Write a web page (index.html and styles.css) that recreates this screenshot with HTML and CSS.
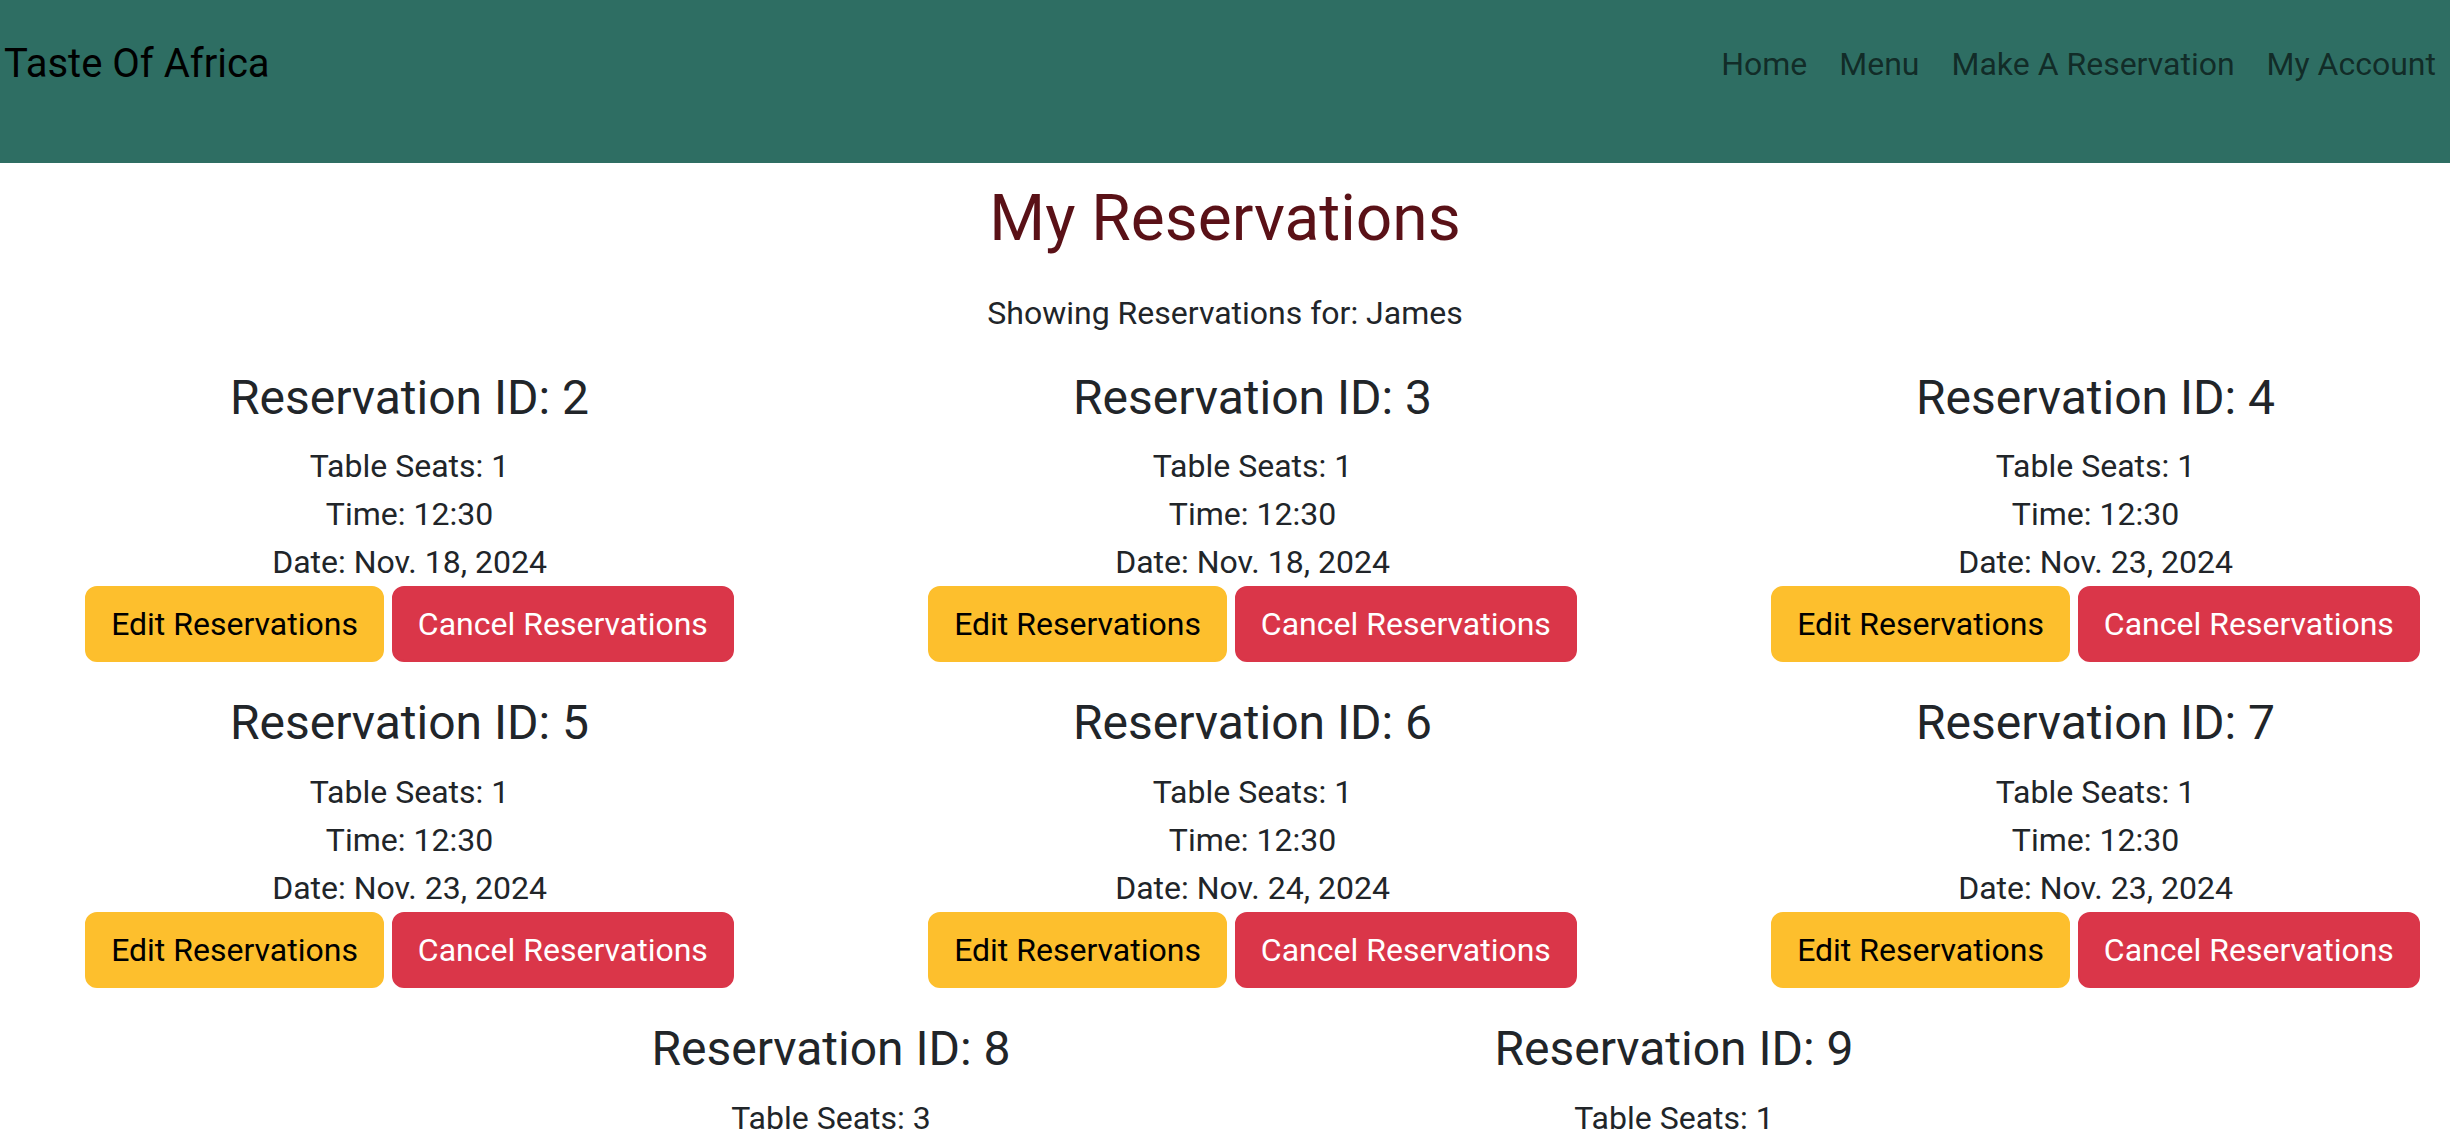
FILE: index.html
```html
<!DOCTYPE html>
<html lang="en">
<head>
<meta charset="utf-8">
<title>My Reservations - Taste Of Africa</title>
<link rel="stylesheet" href="styles.css">
</head>
<body>
<header class="navbar">
  <a class="brand" href="#">Taste Of Africa</a>
  <ul class="nav">
    <li><a class="nav-link" href="#">Home</a></li>
    <li><a class="nav-link" href="#">Menu</a></li>
    <li><a class="nav-link" href="#">Make A Reservation</a></li>
    <li><a class="nav-link" href="#">My Account</a></li>
  </ul>
</header>
<main class="page">
  <h2 class="page-title">My Reservations</h2>
  <p class="owner">Showing Reservations for: James</p>
  <div class="res-grid">
    <div class="res">
      <h4 class="res-title">Reservation ID: 2</h4>
      <p class="res-line">Table Seats: 1</p>
      <p class="res-line">Time: 12:30</p>
      <p class="res-line">Date: Nov. 18, 2024</p>
      <div class="actions"><a class="btn btn-edit" href="#">Edit Reservations</a> <a class="btn btn-cancel" href="#">Cancel Reservations</a></div>
    </div>
    <div class="res">
      <h4 class="res-title">Reservation ID: 3</h4>
      <p class="res-line">Table Seats: 1</p>
      <p class="res-line">Time: 12:30</p>
      <p class="res-line">Date: Nov. 18, 2024</p>
      <div class="actions"><a class="btn btn-edit" href="#">Edit Reservations</a> <a class="btn btn-cancel" href="#">Cancel Reservations</a></div>
    </div>
    <div class="res">
      <h4 class="res-title">Reservation ID: 4</h4>
      <p class="res-line">Table Seats: 1</p>
      <p class="res-line">Time: 12:30</p>
      <p class="res-line">Date: Nov. 23, 2024</p>
      <div class="actions"><a class="btn btn-edit" href="#">Edit Reservations</a> <a class="btn btn-cancel" href="#">Cancel Reservations</a></div>
    </div>
    <div class="res">
      <h4 class="res-title">Reservation ID: 5</h4>
      <p class="res-line">Table Seats: 1</p>
      <p class="res-line">Time: 12:30</p>
      <p class="res-line">Date: Nov. 23, 2024</p>
      <div class="actions"><a class="btn btn-edit" href="#">Edit Reservations</a> <a class="btn btn-cancel" href="#">Cancel Reservations</a></div>
    </div>
    <div class="res">
      <h4 class="res-title">Reservation ID: 6</h4>
      <p class="res-line">Table Seats: 1</p>
      <p class="res-line">Time: 12:30</p>
      <p class="res-line">Date: Nov. 24, 2024</p>
      <div class="actions"><a class="btn btn-edit" href="#">Edit Reservations</a> <a class="btn btn-cancel" href="#">Cancel Reservations</a></div>
    </div>
    <div class="res">
      <h4 class="res-title">Reservation ID: 7</h4>
      <p class="res-line">Table Seats: 1</p>
      <p class="res-line">Time: 12:30</p>
      <p class="res-line">Date: Nov. 23, 2024</p>
      <div class="actions"><a class="btn btn-edit" href="#">Edit Reservations</a> <a class="btn btn-cancel" href="#">Cancel Reservations</a></div>
    </div>
    <div class="res">
      <h4 class="res-title">Reservation ID: 8</h4>
      <p class="res-line">Table Seats: 3</p>
      <p class="res-line">Time: 12:30</p>
      <p class="res-line">Date: Nov. 25, 2024</p>
      <div class="actions"><a class="btn btn-edit" href="#">Edit Reservations</a> <a class="btn btn-cancel" href="#">Cancel Reservations</a></div>
    </div>
    <div class="res">
      <h4 class="res-title">Reservation ID: 9</h4>
      <p class="res-line">Table Seats: 1</p>
      <p class="res-line">Time: 12:30</p>
      <p class="res-line">Date: Nov. 26, 2024</p>
      <div class="actions"><a class="btn btn-edit" href="#">Edit Reservations</a> <a class="btn btn-cancel" href="#">Cancel Reservations</a></div>
    </div>
  </div>
</main>
</body>
</html>
```
FILE: styles.css
```css
html {
  scrollbar-width: none;
}
html::-webkit-scrollbar {
  display: none;
}
body {
  margin: 0;
  font-family: Roboto, "Liberation Sans", Arial, sans-serif;
  font-size: 32px;
  line-height: 1.5;
  color: #212529;
  background: #fff;
  overflow-x: hidden;
}
a {
  text-decoration: none;
}

/* Navbar */
.navbar {
  display: flex;
  justify-content: space-between;
  align-items: center;
  background: #2e6e63;
  height: 80px;
  padding: 24px 0 59px 0;
}
.brand {
  font-size: 40px;
  line-height: 60px;
  color: #000;
  padding-left: 4px;
}
.nav {
  display: flex;
  list-style: none;
  margin: 0;
  padding: 0;
}
.nav-link {
  display: block;
  padding: 16px 16px;
  font-size: 32px;
  line-height: 48px;
  color: rgba(0, 0, 0, 0.62);
}
.nav li:last-child .nav-link {
  padding-right: 14px;
}

/* Page */
.page {
  text-align: center;
}
.page-title {
  margin: 18px 0 0;
  font-size: 64px;
  font-weight: 400;
  line-height: 1.2;
  color: #5a1117;
}
.owner {
  margin: 31px 0 32px;
}
.res-grid {
  display: flex;
  flex-wrap: wrap;
  justify-content: center;
  width: 2529px;
  margin-left: -12px;
}
.res {
  flex: 0 0 843px;
  margin-bottom: 32px;
}
.res-title {
  margin: 0 0 16px;
  font-size: 48px;
  font-weight: 400;
  line-height: 1.2;
  color: #212529;
}
.res-line {
  margin: 0;
}
.actions {
  white-space: nowrap;
}
.btn {
  display: inline-block;
  padding: 12px 24px;
  font-size: 32px;
  line-height: 48px;
  border: 2px solid transparent;
  border-radius: 12px;
  vertical-align: middle;
}
.btn-edit {
  background: #fdbf2d;
  border-color: #fdbf2d;
  color: #000;
}
.btn-cancel {
  background: #da3649;
  border-color: #da3649;
  color: #fff;
}
```
